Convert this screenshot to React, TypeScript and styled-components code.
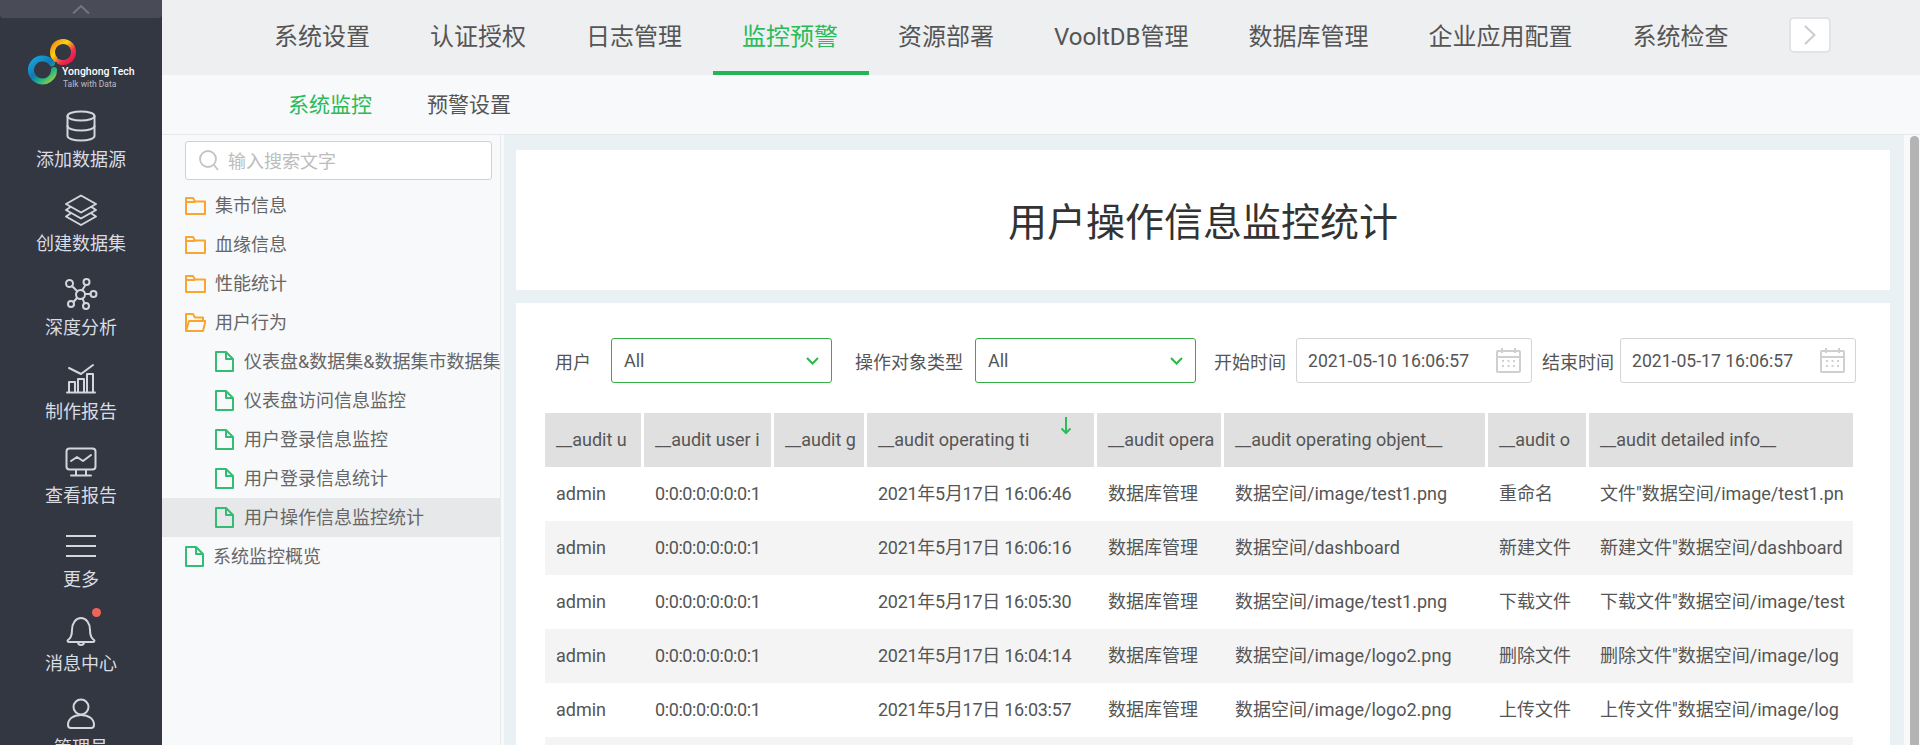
import React from 'react';
import styled, { createGlobalStyle } from 'styled-components';

const GlobalStyle = createGlobalStyle`
  html, body {
    margin: 0;
    height: 745px;
    overflow: hidden;
  }
  body {
    font-family: Roboto, "Noto Sans CJK SC", sans-serif;
    color: #555;
  }
  * { box-sizing: border-box; }
`;

const GREEN = '#2bbb57';

const navItems = ['系统设置', '认证授权', '日志管理', '监控预警', '资源部署', 'VooltDB管理', '数据库管理', '企业应用配置', '系统检查'];

const columns = [96, 127, 90, 227, 124, 261, 98, 264];
const headers = ['__audit u', '__audit user i', '__audit g', '__audit operating ti', '__audit opera', '__audit operating objent__', '__audit o', '__audit detailed info__'];

const rows = [
  ['admin', '0:0:0:0:0:0:0:1', '', '2021年5月17日 16:06:46', '数据库管理', '数据空间/image/test1.png', '重命名', '文件"数据空间/image/test1.pn'],
  ['admin', '0:0:0:0:0:0:0:1', '', '2021年5月17日 16:06:16', '数据库管理', '数据空间/dashboard', '新建文件', '新建文件"数据空间/dashboard'],
  ['admin', '0:0:0:0:0:0:0:1', '', '2021年5月17日 16:05:30', '数据库管理', '数据空间/image/test1.png', '下载文件', '下载文件"数据空间/image/test'],
  ['admin', '0:0:0:0:0:0:0:1', '', '2021年5月17日 16:04:14', '数据库管理', '数据空间/image/logo2.png', '删除文件', '删除文件"数据空间/image/log'],
  ['admin', '0:0:0:0:0:0:0:1', '', '2021年5月17日 16:03:57', '数据库管理', '数据空间/image/logo2.png', '上传文件', '上传文件"数据空间/image/log'],
  ['', '', '', '', '', '', '', ''],
];

// columns holding mostly digits: Roboto's figures run wider than the reference
const cellSpacing = [0, -0.4, 0, -0.28, 0, 0, 0, 0];

const Page = styled.div`
  display: flex;
  width: 1920px;
  height: 745px;
  overflow: hidden;
`;

const Sidebar = styled.aside`
  flex: 0 0 162px;
  background: #333742;
  overflow: hidden;
`;

const Handle = styled.div`
  height: 18px;
  background: #494b57;
  border-radius: 0 0 4px 4px;
  display: flex;
  justify-content: center;
  padding-top: 5px;
`;

const LogoArea = styled.div`
  height: 91px;
  padding: 21px 0 0 28px;
  display: flex;
  position: relative;
`;

const LogoText = styled.div`
  position: absolute;
  left: 62px;
  top: 47px;
  color: #fff;
  font-size: 10.5px;
  font-weight: 500;
  line-height: 14px;
  white-space: nowrap;
`;

const LogoSub = styled.div`
  color: #b9bcc2;
  font-size: 8.5px;
  font-weight: 400;
  line-height: 10px;
  padding-left: 1px;
`;

const SideItem = styled.div`
  height: 84px;
  display: flex;
  flex-direction: column;
  align-items: center;
  position: relative;
`;

const SideIcon = styled.div`
  height: 34px;
  display: flex;
  align-items: center;
  justify-content: center;
`;

const SideLabel = styled.div`
  font-size: 18px;
  line-height: 34px;
  color: #d9dde2;
`;

const Dot = styled.span`
  position: absolute;
  left: 92px;
  top: -5px;
  width: 9px;
  height: 9px;
  border-radius: 50%;
  background: #ee6658;
`;

const Main = styled.div`
  flex: 1;
  min-width: 0;
  display: flex;
  flex-direction: column;
`;

const TopNav = styled.nav`
  flex: 0 0 75px;
  background: #eeeff1;
  display: flex;
  padding-left: 83px;
  position: relative;
`;

const NavItem = styled.div<{ $active?: boolean }>`
  height: 75px;
  padding: 0 31px 2px 29px;
  display: flex;
  align-items: center;
  font-size: 24px;
  white-space: nowrap;
  color: ${(p) => (p.$active ? GREEN : '#555')};
  border-bottom: 4px solid ${(p) => (p.$active ? '#22b455' : 'transparent')};
`;

const NextButton = styled.button`
  position: absolute;
  left: 1627px;
  top: 17px;
  width: 42px;
  height: 36px;
  padding: 0;
  background: #fff;
  border: 2px solid #e1e3e7;
  border-radius: 5px;
  display: flex;
  align-items: center;
  justify-content: center;
`;

const SubNav = styled.div`
  flex: 0 0 60px;
  background: #f8f9fb;
  border-bottom: 1px solid #e6e8ea;
  display: flex;
  align-items: center;
  gap: 55px;
  padding: 0 0 3px 126px;
`;

const SubItem = styled.div<{ $active?: boolean }>`
  font-size: 21px;
  color: ${(p) => (p.$active ? GREEN : '#555')};
`;

const Body = styled.div`
  flex: 1;
  min-height: 0;
  display: flex;
`;

const Tree = styled.div`
  flex: 0 0 339px;
  background: #f8f9fb;
  border-right: 1px solid #e8eaec;
  padding-top: 6px;
  overflow: hidden;
`;

const SearchBox = styled.div`
  width: 307px;
  height: 39px;
  margin: 0 0 6px 23px;
  background: #fff;
  border: 1px solid #cfd1d4;
  border-radius: 3px;
  display: flex;
  align-items: center;
  gap: 9px;
  padding: 0 0 2px 13px;
  font-size: 18px;
  color: #bcbcbc;

  svg {
    flex: none;
    margin-top: 2px;
  }
`;

const TreeRow = styled.div<{ $indent?: boolean; $selected?: boolean }>`
  height: 39px;
  display: flex;
  align-items: center;
  gap: ${(p) => (p.$indent ? '10px' : '9px')};
  padding: 0 0 3px ${(p) => (p.$indent ? '53px' : '23px')};
  font-size: 18px;
  color: #666;
  white-space: nowrap;
  background: ${(p) => (p.$selected ? '#e7e8ea' : 'transparent')};
  overflow: hidden;

  svg {
    flex: none;
    margin-top: 3px;
  }
`;

const Gutter = styled.div`
  flex: 0 0 3px;
  background: #f8f9fb;
`;

const Content = styled.div`
  flex: 1;
  min-width: 0;
  background: #e9f1f4;
  padding: 15px 14px 0 12px;
  overflow: hidden;
`;

const TitlePanel = styled.div`
  height: 140px;
  background: #fff;
  display: flex;
  align-items: center;
  justify-content: center;
  font-size: 39px;
  color: #333;
  margin-bottom: 13px;
  padding-bottom: 2px;
`;

const TablePanel = styled.div`
  background: #fff;
  padding: 35px 37px 0 29px;
  height: 500px;
`;

const FilterRow = styled.div`
  display: flex;
  align-items: center;
  height: 45px;
  padding-left: 10px;
  white-space: nowrap;
  margin-right: -3px;
`;

const FilterLabel = styled.span<{ $gap: number; $lead?: number }>`
  font-size: 18px;
  color: #555;
  margin-left: ${(p) => p.$lead ?? 0}px;
  margin-right: ${(p) => p.$gap}px;
`;

const Select = styled.div`
  flex: none;
  width: 221px;
  height: 45px;
  border: 1px solid #33ae45;
  border-radius: 3px;
  display: flex;
  align-items: center;
  justify-content: space-between;
  padding: 0 12px;
  font-size: 18px;
  color: #555;
`;

const DateBox = styled.div`
  flex: none;
  width: 236px;
  height: 45px;
  border: 1px solid #d2d4d6;
  border-radius: 3px;
  display: flex;
  align-items: center;
  justify-content: space-between;
  padding: 0 10px 0 11px;
  font-size: 17.6px;
  color: #555;
`;

const TableWrap = styled.div`
  margin-top: 30px;
`;

const Row = styled.div<{ $kind: 'head' | 'even' | 'odd' }>`
  display: grid;
  grid-template-columns: ${columns.map((c) => `${c}px`).join(' ')};
  column-gap: 3px;
  height: 54px;
  background: ${(p) => (p.$kind === 'even' ? '#f4f4f4' : '#fff')};
`;

const HeadCell = styled.div`
  position: relative;
  background: #e0e0e0;
  padding: 0 0 0 11px;
  font-size: 18px;
  color: #555;
  line-height: 54px;
  white-space: nowrap;
  overflow: hidden;
`;

const Cell = styled.div<{ $spacing: number }>`
  padding: 0 4px 0 11px;
  font-size: 18px;
  color: #555;
  line-height: 54px;
  letter-spacing: ${(p) => p.$spacing}px;
  white-space: nowrap;
  overflow: hidden;
`;

const SortArrow = styled.span`
  position: absolute;
  left: 193px;
  top: 4px;
  display: flex;
`;

const ScrollTrack = styled.div`
  flex: 0 0 16px;
  background: #f8f9fb;
  padding: 1px 1px 0 6px;
`;

const ScrollThumb = styled.div`
  height: 100%;
  background: #b4b4b4;
  border-radius: 5px 5px 0 0;
`;

const Stroke = { fill: 'none', stroke: '#d3d6da', strokeWidth: 2, strokeLinecap: 'round', strokeLinejoin: 'round' } as const;

function Logo() {
  return (
    <svg width="48" height="46" viewBox="0 0 48 46" fill="none" strokeLinecap="round">
      <defs>
        <linearGradient id="ringA" gradientUnits="userSpaceOnUse" x1="24" y1="4" x2="44" y2="24">
          <stop offset="0" stopColor="#f28a1e" />
          <stop offset="0.35" stopColor="#fbd40e" />
          <stop offset="0.7" stopColor="#f0304c" />
          <stop offset="1" stopColor="#e0144f" />
        </linearGradient>
        <linearGradient id="ringB" gradientUnits="userSpaceOnUse" x1="4" y1="20" x2="24" y2="44">
          <stop offset="0" stopColor="#19a4d8" />
          <stop offset="0.45" stopColor="#0f78b5" />
          <stop offset="0.7" stopColor="#1fb487" />
          <stop offset="1" stopColor="#a6d23b" />
        </linearGradient>
      </defs>
      <path d="M27.58 20.42A10.500 10.500 0 1 1 31.41 22.87" stroke="url(#ringA)" strokeWidth="5" />
      <path d="M23.92 24.400A11.500 11.500 0 1 0 26 31" stroke="url(#ringB)" strokeWidth="6" />
    </svg>
  );
}

const icons = {
  database: (
    <svg width="30" height="32" viewBox="0 0 30 32" {...Stroke}>
      <ellipse cx="15" cy="6" rx="13.500" ry="4.500" />
      <path d="M1.500 6v20c0 2.500 6 4.500 13.500 4.500s13.500-2 13.500-4.500V6" />
      <path d="M1.500 16c0 2.500 6 4.500 13.500 4.500s13.500-2 13.500-4.500" />
    </svg>
  ),
  layers: (
    <svg width="34" height="33" viewBox="0 0 34 33" {...Stroke}>
      <path d="M17 1.500 32 10 17 18.500 2 10Z" />
      <path d="M6.500 13 2 16 17 24.500 32 16 27.500 13" />
      <path d="M6.500 19.500 2 22.500 17 31 32 22.500 27.500 19.500" />
    </svg>
  ),
  graph: (
    <svg width="34" height="32" viewBox="0 0 34 32" {...Stroke}>
      <circle cx="16.500" cy="16.500" r="4.500" />
      <circle cx="5.500" cy="5.500" r="3.500" />
      <circle cx="22.500" cy="4" r="3" />
      <circle cx="29.500" cy="16" r="3" />
      <circle cx="22" cy="28" r="3" />
      <circle cx="7" cy="26" r="3" />
      <path d="M8 8l5.500 5.500M21.500 7l-3.500 5.500M26.500 16h-5.500M20.500 25.500l-2-5M9.500 24l3.500-4" />
    </svg>
  ),
  chart: (
    <svg width="32" height="32" viewBox="0 0 32 32" {...Stroke}>
      <path d="M2 30.500h28" />
      <path d="M4 30V20h6v10M13 30V17h6v13M22 30V12h6v18" />
      <path d="M4 6l12 6L28 3" />
    </svg>
  ),
  monitor: (
    <svg width="32" height="30" viewBox="0 0 32 30" {...Stroke}>
      <rect x="1.500" y="1.500" width="29" height="21" rx="3" />
      <path d="M6 14l6-4 6 4 8-6" />
      <path d="M11 23v5M21 23v5M6 28.500h20" />
    </svg>
  ),
  menu: (
    <svg width="30" height="22" viewBox="0 0 30 22" fill="none" stroke="#d3d6da" strokeWidth="2">
      <path d="M0 1h30M0 11h30M0 21h30" />
    </svg>
  ),
  bell: (
    <svg width="30" height="32" viewBox="0 0 30 32" {...Stroke}>
      <path d="M2 26c3-2 4-5 4-10 0-7 4-12 9-12s9 5 9 12c0 5 1 8 4 10 1 1 0 2-1 2H3c-1 0-2-1-1-2Z" />
      <path d="M12 28c0 4 6 4 6 0" />
    </svg>
  ),
  user: (
    <svg width="30" height="32" viewBox="0 0 30 32" {...Stroke}>
      <circle cx="15" cy="9" r="7.500" />
      <path d="M2 27c0-6 5-10 13-10s13 4 13 10c0 2-1 3-3 3H5c-2 0-3-1-3-3Z" />
    </svg>
  ),
};

const sideItems: { label: string; icon: React.ReactNode; dot?: boolean }[] = [
  { label: '添加数据源', icon: icons.database },
  { label: '创建数据集', icon: icons.layers },
  { label: '深度分析', icon: icons.graph },
  { label: '制作报告', icon: icons.chart },
  { label: '查看报告', icon: icons.monitor },
  { label: '更多', icon: icons.menu },
  { label: '消息中心', icon: icons.bell, dot: true },
  { label: '管理员', icon: icons.user },
];

function FolderClosed() {
  return (
    <svg width="21" height="19" viewBox="0 0 21 19" fill="none" stroke="#f9a52f" strokeWidth="2" strokeLinejoin="round">
      <path d="M1 2h7l2 3.500h10V18H1Z" />
      <path d="M1 6h9" />
    </svg>
  );
}

function FolderOpen() {
  return (
    <svg width="21" height="19" viewBox="0 0 21 19" fill="none" stroke="#f9a52f" strokeWidth="2" strokeLinejoin="round">
      <path d="M1 18V1h7l2 3.500h8V8" />
      <path d="M1 18 4 8h16.500L18 18Z" />
    </svg>
  );
}

function FileIcon() {
  return (
    <svg width="19" height="21" viewBox="0 0 19 21" fill="none" stroke="#34bd72" strokeWidth="2" strokeLinejoin="round">
      <path d="M1 1h10l7 7v12H1Z" />
      <path d="M11 1v7h7" />
    </svg>
  );
}

function Chevron() {
  return (
    <svg width="13" height="8" viewBox="0 0 13 8" fill="none" stroke="#2fb548" strokeWidth="2">
      <path d="M1 1l5.500 5.500L12 1" />
    </svg>
  );
}

function Calendar() {
  return (
    <svg width="25" height="25" viewBox="0 0 25 25" fill="none" stroke="#cfcfcf" strokeWidth="2">
      <rect x="1" y="3" width="23" height="21" rx="1" />
      <path d="M1 9h23M6 0v5M19 0v5" />
      <path d="M6 13h2M11.500 13h2M17 13h2M6 18h2M11.500 18h2M17 18h2" />
    </svg>
  );
}

function DateField({ value }: { value: string }) {
  return (
    <DateBox>
      {value}
      <Calendar />
    </DateBox>
  );
}

export default function App() {
  return (
    <Page>
      <GlobalStyle />
      <Sidebar>
        <Handle>
          <svg width="18" height="9" viewBox="0 0 18 9" fill="none" stroke="#74767e" strokeWidth="2">
            <path d="M1 8.500 9 1l8 7.500" />
          </svg>
        </Handle>
        <LogoArea>
          <Logo />
          <LogoText>
            Yonghong Tech
            <LogoSub>Talk with Data</LogoSub>
          </LogoText>
        </LogoArea>
        {sideItems.map((item) => (
          <SideItem key={item.label}>
            <SideIcon>{item.icon}</SideIcon>
            {item.dot && <Dot />}
            <SideLabel>{item.label}</SideLabel>
          </SideItem>
        ))}
      </Sidebar>
      <Main>
        <TopNav>
          {navItems.map((item) => (
            <NavItem key={item} $active={item === '监控预警'}>
              {item}
            </NavItem>
          ))}
          <NextButton>
            <svg width="12" height="20" viewBox="0 0 12 20" fill="none" stroke="#c9ccd0" strokeWidth="2">
              <path d="M1 1l9.500 9L1 19" />
            </svg>
          </NextButton>
        </TopNav>
        <SubNav>
          <SubItem $active>系统监控</SubItem>
          <SubItem>预警设置</SubItem>
        </SubNav>
        <Body>
          <Tree>
            <SearchBox>
              <svg width="20" height="21" viewBox="0 0 20 21" fill="none" stroke="#c4c4c4" strokeWidth="1.800">
                <circle cx="9" cy="9" r="8" />
                <path d="M15 15l4 5" />
              </svg>
              输入搜索文字
            </SearchBox>
            <TreeRow><FolderClosed />集市信息</TreeRow>
            <TreeRow><FolderClosed />血缘信息</TreeRow>
            <TreeRow><FolderClosed />性能统计</TreeRow>
            <TreeRow><FolderOpen />用户行为</TreeRow>
            <TreeRow $indent><FileIcon />仪表盘&数据集&数据集市数据集</TreeRow>
            <TreeRow $indent><FileIcon />仪表盘访问信息监控</TreeRow>
            <TreeRow $indent><FileIcon />用户登录信息监控</TreeRow>
            <TreeRow $indent><FileIcon />用户登录信息统计</TreeRow>
            <TreeRow $indent $selected><FileIcon />用户操作信息监控统计</TreeRow>
            <TreeRow><FileIcon />系统监控概览</TreeRow>
          </Tree>
          <Gutter />
          <Content>
            <TitlePanel>用户操作信息监控统计</TitlePanel>
            <TablePanel>
              <FilterRow>
                <FilterLabel $gap={20}>用户</FilterLabel>
                <Select>All<Chevron /></Select>
                <FilterLabel $lead={23} $gap={12}>操作对象类型</FilterLabel>
                <Select>All<Chevron /></Select>
                <FilterLabel $lead={18} $gap={10}>开始时间</FilterLabel>
                <DateField value="2021-05-10 16:06:57" />
                <FilterLabel $lead={10} $gap={6}>结束时间</FilterLabel>
                <DateField value="2021-05-17 16:06:57" />
              </FilterRow>
              <TableWrap>
                <Row $kind="head">
                  {headers.map((h, i) => (
                    <HeadCell key={h}>
                      {h}
                      {i === 3 && (
                        <SortArrow>
                          <svg width="12" height="18" viewBox="0 0 12 18" fill="none" stroke={GREEN} strokeWidth="2">
                            <path d="M6 0v16M1.500 11.500 6 16l4.500-4.500" />
                          </svg>
                        </SortArrow>
                      )}
                    </HeadCell>
                  ))}
                </Row>
                {rows.map((row, i) => (
                  <Row key={i} $kind={i % 2 === 1 ? 'even' : 'odd'}>
                    {row.map((c, j) => (
                      <Cell key={j} $spacing={cellSpacing[j]}>{c}</Cell>
                    ))}
                  </Row>
                ))}
              </TableWrap>
            </TablePanel>
          </Content>
          <ScrollTrack>
            <ScrollThumb />
          </ScrollTrack>
        </Body>
      </Main>
    </Page>
  );
}
